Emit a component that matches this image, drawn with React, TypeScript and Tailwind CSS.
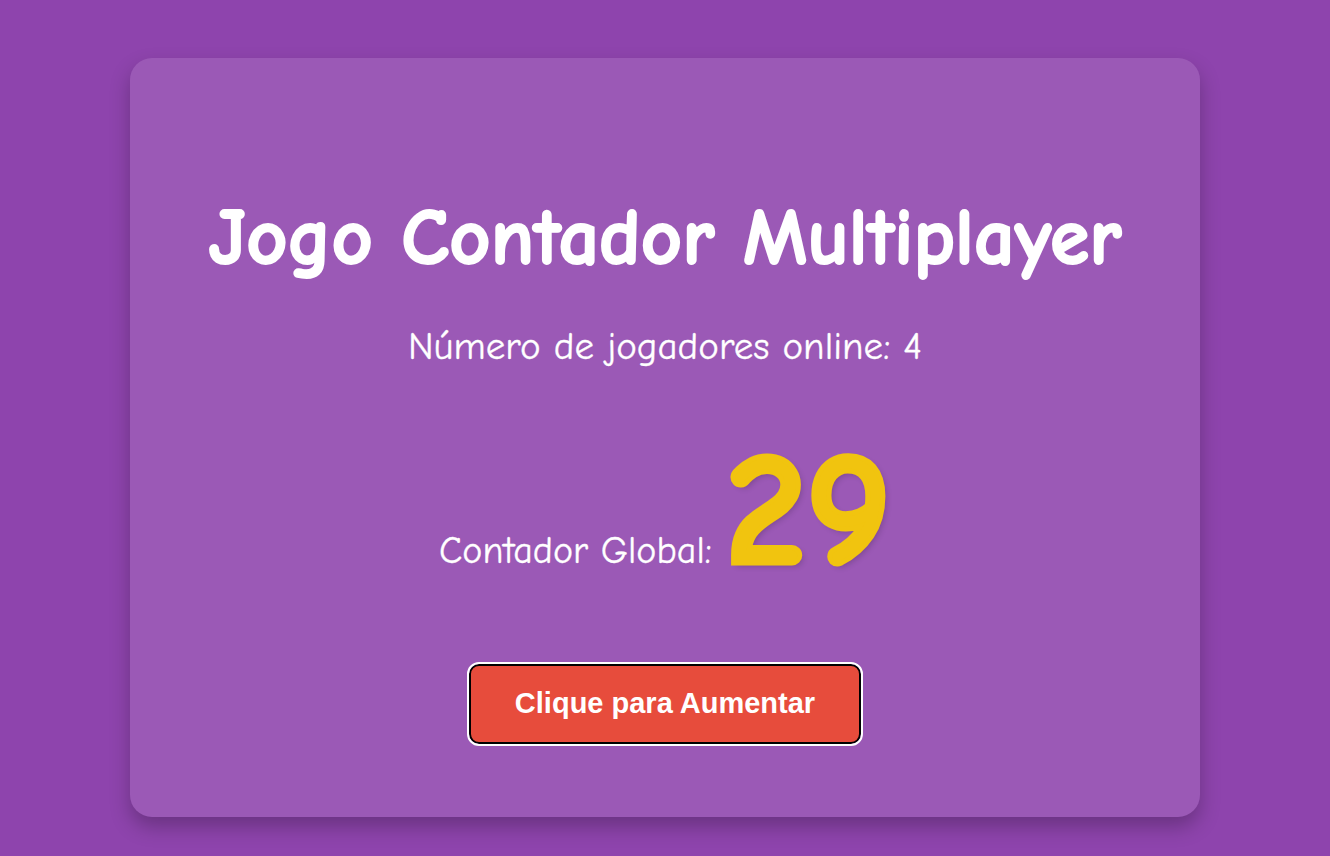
import React from "react";

export default function App() {
  const comic = { fontFamily: '"Comic Sans MS", "Comic Neue", cursive' };
  return (
    <div className="min-h-[856px] w-full bg-[#8e44ad] pt-[58px]">
      <div className="mx-auto flex h-[759px] w-[1070px] flex-col items-center rounded-[22px] bg-[#9b59b6] shadow-[0_10px_20px_rgba(0,0,0,0.25)]">
        <h1
          className="mt-[130px] text-[80px] font-bold leading-[100px] text-white [-webkit-text-stroke:2px_white]"
          style={comic}
        >
          Jogo Contador Multiplayer
        </h1>
        <p className="mt-[35px] text-[39px] leading-[48px] text-white [-webkit-text-stroke:0.3px_white]" style={comic}>
          Número de jogadores online: 4
        </p>
        <div className="mt-[55px] flex items-baseline justify-center gap-[14px] text-white" style={comic}>
          <span className="text-[38px] [-webkit-text-stroke:0.3px_white]">Contador Global:</span>
          <span className="text-[162px] font-bold leading-[170px] text-[#f1c40f] [-webkit-text-stroke:5px_#f1c40f] [text-shadow:3px_3px_6px_rgba(0,0,0,0.2)]">
            29
          </span>
        </div>
        <button
          className="mt-[68px] h-[80px] w-[392px] rounded-[10px] border-2 border-black bg-[#e74c3c] text-[29px] font-bold text-white outline-2 outline-white"
          style={{ fontFamily: '"Liberation Sans", Arial, sans-serif' }}
        >
          Clique para Aumentar
        </button>
      </div>
    </div>
  );
}
